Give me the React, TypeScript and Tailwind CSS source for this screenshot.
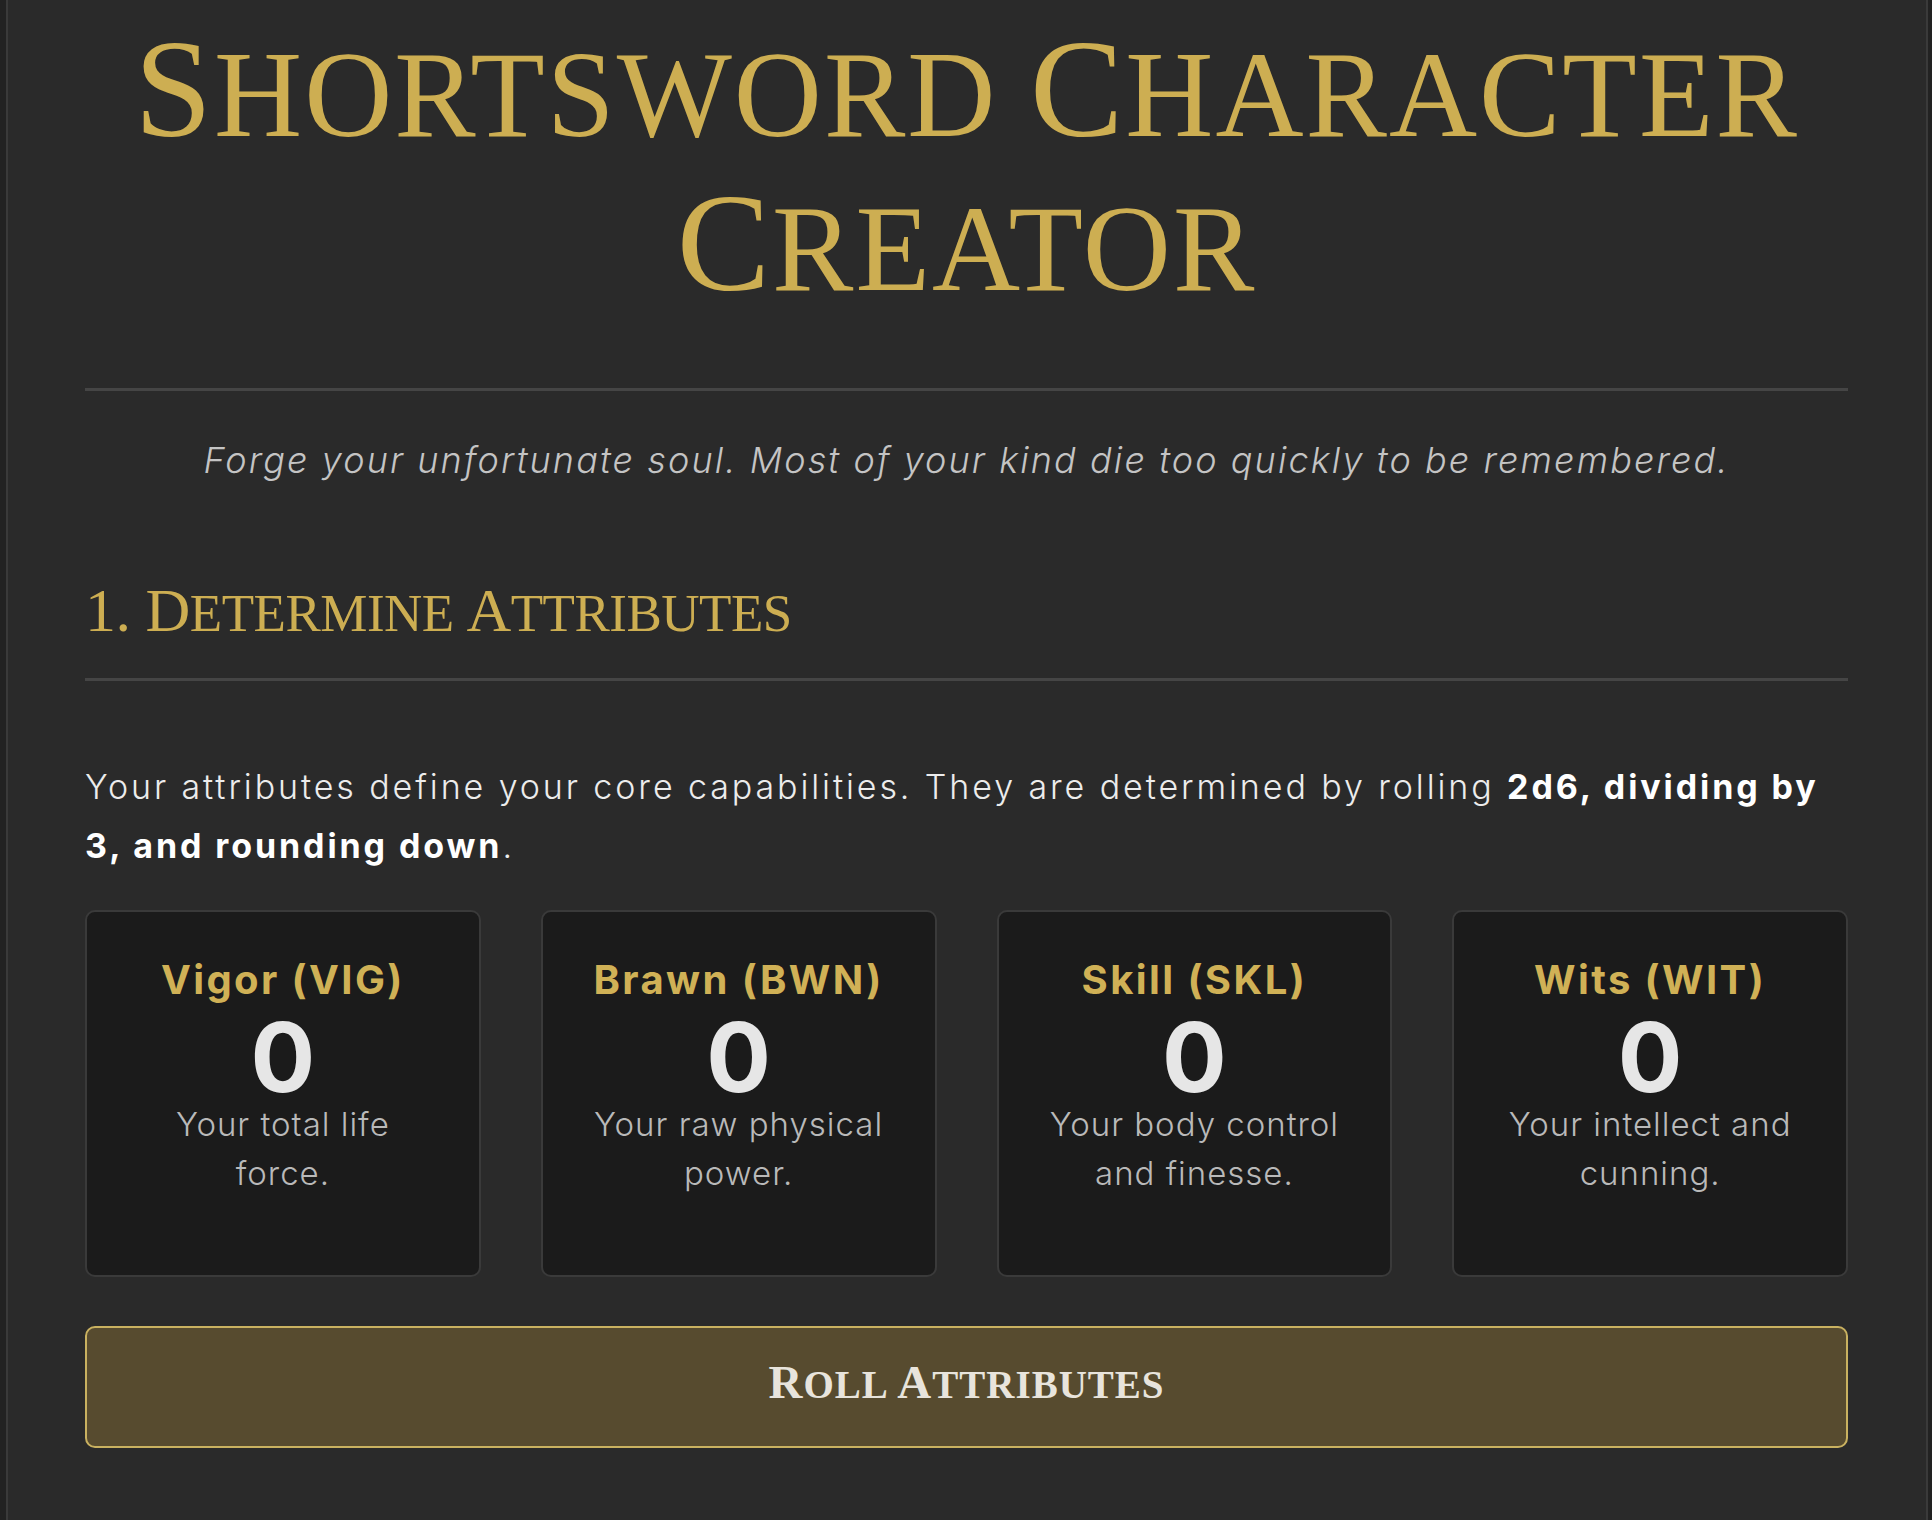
const attributes = [
    { name: "Vigor (VIG)", value: 0, desc: "Your total life force." },
    { name: "Brawn (BWN)", value: 0, desc: "Your raw physical power." },
    { name: "Skill (SKL)", value: 0, desc: "Your body control and finesse." },
    { name: "Wits (WIT)", value: 0, desc: "Your intellect and cunning." },
];

const AttributeCard = ({ name, value, desc }: { name: string; value: number; desc: string }) => {
    return <div className="h-[367px] rounded-[10px] border-2 border-[#3a3a3a] bg-[#1b1b1b] px-[44px] pt-[44px] text-center">
        <h3 className="-mx-[30px] text-[40px] leading-[48px] font-bold tracking-[0.06em] text-[#d0b156]">{name}</h3>
        <div className="mt-[10px] text-[96px] leading-[86px] font-bold text-[#e6e6e6]">{value}</div>
        <p className="text-[33px] leading-[49px] font-light tracking-[0.03em] text-[#b9b9b9]">{desc}</p>
    </div>
}

export default function App() {
    return <div className="min-h-screen bg-[#222222] font-['Inter',sans-serif]">
        <div className="ml-[6px] mr-[4px] min-h-screen border-x-2 border-[#3a3a3a] bg-[#2a2a2a] pl-[77px] pr-[78px] pb-[60px]">
            <h1 className="pt-[18px] text-center font-['Liberation_Serif',serif] text-[122px] leading-[154px] font-normal uppercase tracking-[2px] text-[#cdae52]">
                <span className="text-[140px] leading-none">S</span>hortsword <span className="text-[140px] leading-none">C</span>haracter <span className="text-[140px] leading-none">C</span>reator
            </h1>
            <div className="mt-[62px] h-[3px] bg-[#454545]" />

            <p className="mt-[47px] text-center text-[36px] leading-[44px] font-light italic tracking-[2.1px] text-[#c4c4c4]">
                Forge your unfortunate soul. Most of your kind die too quickly to be remembered.
            </p>

            <h2 className="mt-[95px] font-['Liberation_Serif',serif] text-[53px] leading-[72px] font-normal uppercase tracking-[-0.5px] text-[#cdae52]">
                <span className="text-[62px] leading-none">1. D</span>etermine <span className="text-[62px] leading-none">A</span>ttributes
            </h2>
            <div className="mt-[29px] h-[3px] bg-[#454545]" />

            <p className="mt-[76px] text-[34px] leading-[59px] font-light tracking-[2.9px] text-[#ececec]">
                Your attributes define your core capabilities. They are determined by rolling <strong className="font-bold text-white">2d6, dividing by</strong> <strong className="font-bold text-white">3, and rounding down</strong>.
            </p>

            <div className="mt-[35px] grid grid-cols-4 gap-[60px]">
                {attributes.map((attr, idx) => {
                    return <AttributeCard key={idx} name={attr.name} value={attr.value} desc={attr.desc} />
                })}
            </div>

            <button className="mt-[49px] flex h-[122px] w-full items-center justify-center rounded-[10px] border-2 border-[#c9b160] bg-[#574b2f] pb-[8px] font-['Liberation_Serif',serif] text-[39px] font-bold uppercase tracking-[1px] text-[#e8e4dc]">
                <span className="leading-[47px]"><span className="text-[47px]">R</span>oll <span className="text-[47px]">A</span>ttributes</span>
            </button>
        </div>
    </div>
}
